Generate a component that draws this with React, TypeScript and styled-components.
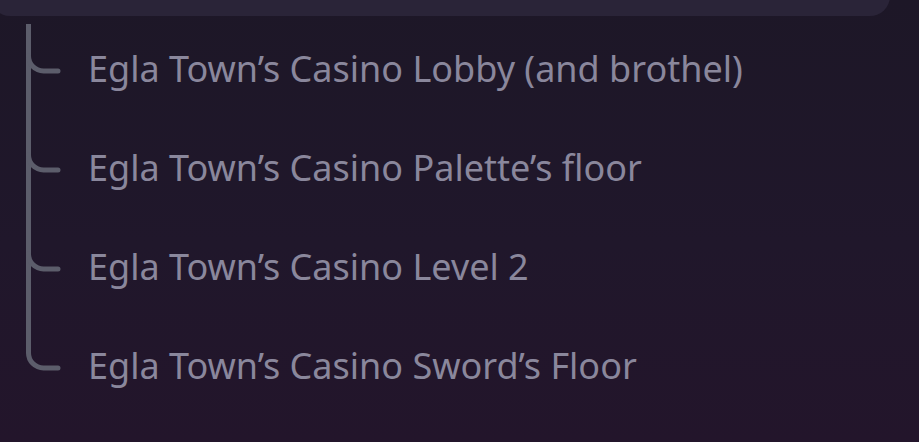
import React from "react";
import styled, { createGlobalStyle } from "styled-components";

const Global = createGlobalStyle`
  html, body { margin: 0; padding: 0; }
  body {
    width: 919px;
    height: 442px;
    overflow: hidden;
    background: linear-gradient(180deg, #1d1727 0%, #20172b 55%, #23152b 100%);
  }
`;

const Page = styled.div`
  width: 919px;
  height: 442px;
  display: flex;
  flex-direction: column;
  overflow: hidden;
`;

const TopCard = styled.div`
  flex: none;
  width: 900px;
  height: 40px;
  margin-top: -24px;
  margin-left: -10px;
  border-radius: 22px;
  background: #2a2438;
`;

const Tree = styled.ul`
  list-style: none;
  margin: 8px 0 0 26px;
  padding: 0;
  display: flex;
  flex-direction: column;
`;

const Row = styled.li`
  display: flex;
  align-items: flex-start;
  height: 99px;
`;

const Connector = styled.svg`
  flex: none;
  width: 36px;
  height: 99px;
  display: block;
`;

const Label = styled.span`
  margin-left: 26px;
  margin-top: 24px;
  font-family: "Noto Sans", "Open Sans", sans-serif;
  font-size: 36px;
  line-height: 42px;
  color: #8a879c;
  white-space: nowrap;
`;

const items = [
  "Egla Town’s Casino Lobby (and brothel)",
  "Egla Town’s Casino Palette’s floor",
  "Egla Town’s Casino Level 2",
  "Egla Town’s Casino Sword’s Floor",
];

function Branch({ last }: { last: boolean }) {
  const stroke = "#5c5d6b";
  const curve = "M2.5 32 A15 15 0 0 0 17.5 47 H32";
  return (
    <Connector viewBox="0 0 36 99">
      {last ? (
        <path
          d={"M2.5 0 V32 A15 15 0 0 0 17.5 47 H32"}
          fill="none"
          stroke={stroke}
          strokeWidth={5}
          strokeLinecap="round"
        />
      ) : (
        <>
          <path d="M2.5 0 V99" fill="none" stroke={stroke} strokeWidth={5} />
          <path d={curve} fill="none" stroke={stroke} strokeWidth={5} strokeLinecap="round" />
        </>
      )}
    </Connector>
  );
}

export default function App() {
  return (
    <Page>
      <Global />
      <TopCard />
      <Tree>
        {items.map((t, i) => (
          <Row key={t}>
            <Branch last={i === items.length - 1} />
            <Label>{t}</Label>
          </Row>
        ))}
      </Tree>
    </Page>
  );
}
